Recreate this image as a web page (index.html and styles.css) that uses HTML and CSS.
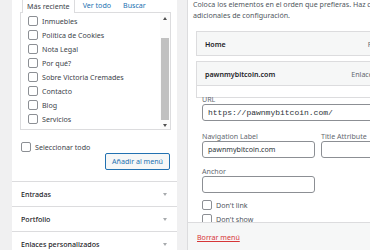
FILE: index.html
```html
<!DOCTYPE html>
<html lang="es">

<head>
  <meta charset="UTF-8">
  <meta name="viewport" content="width=device-width, initial-scale=1.0">
  <title>Menús</title>
  <link rel="stylesheet" href="styles.css">
</head>

<body>
  <div id="screen">
    <div id="sidebar">
      <div class="tabs">
        <span class="tab active">Más reciente</span>
        <span class="tab">Ver todo</span>
        <span class="tab">Buscar</span>
      </div>
      <div class="checklist-box">
        <ul class="checklist">
          <li><span class="cb"></span>Inmuebles</li>
          <li><span class="cb"></span>Política de Cookies</li>
          <li><span class="cb"></span>Nota Legal</li>
          <li><span class="cb"></span>Por qué?</li>
          <li><span class="cb"></span>Sobre Victoria Cremades</li>
          <li><span class="cb"></span>Contacto</li>
          <li><span class="cb"></span>Blog</li>
          <li><span class="cb"></span>Servicios</li>
        </ul>
        <div class="scrollbar">
          <span class="arrow up"></span>
          <div class="track">
            <div class="thumb"></div>
          </div>
          <span class="arrow down"></span>
        </div>
      </div>
      <div class="select-all"><span class="cb"></span>Seleccionar todo</div>
      <div class="add-row"><span class="button">Añadir al menú</span></div>
      <div class="section">Entradas<span class="caret"></span></div>
      <div class="section">Portfolio<span class="caret"></span></div>
      <div class="section">Enlaces personalizados<span class="caret"></span></div>
    </div>

    <div id="editor">
      <div class="editor-body">
        <p class="intro">
          <span>Coloca los elementos en el orden que prefieras. Haz clic en la flecha a la derecha del elemento para mostrar las opciones</span>
          <span>adicionales de configuración.</span>
        </p>
        <div class="menu-item item-home">
          <span class="item-title">Home</span>
          <span class="item-type">Página</span>
        </div>
        <div class="menu-item item-link">
          <span class="item-title">pawnmybitcoin.com</span>
          <span class="item-type">Enlace personalizado</span>
        </div>
        <div class="item-settings"></div>

        <div class="fields">
          <label class="field wide">
            <span class="label">URL</span>
            <span class="input mono">https://pawnmybitcoin.com/</span>
          </label>
          <div class="field-row">
            <label class="field">
              <span class="label">Navigation Label</span>
              <span class="input">pawnmybitcoin.com</span>
            </label>
            <label class="field">
              <span class="label">Title Attribute</span>
              <span class="input"></span>
            </label>
          </div>
          <label class="field">
            <span class="label">Anchor</span>
            <span class="input"></span>
          </label>
          <div class="option"><span class="cb"></span>Don't link</div>
          <div class="option"><span class="cb"></span>Don't show</div>
        </div>
      </div>
      <div class="editor-footer">
        <a class="delete">Borrar menú</a>
      </div>
    </div>
  </div>
</body>

</html>
```

FILE: styles.css
```css
* {
  margin: 0;
  padding: 0;
  box-sizing: border-box;
}

li {
  list-style: none;
}

html,
body {
  width: 370px;
  height: 250px;
  overflow: hidden;
}

body {
  background: #f0f0f1;
  font-family: "Noto Sans", "Open Sans", sans-serif;
  font-size: 7.1px;
  color: #3c434a;
}

#screen {
  display: flex;
  height: 250px;
}

/* 左侧：添加菜单项 */
#sidebar {
  width: 165px;
  margin-left: 12px;
  background: #ffffff;
  flex: none;
}

.tabs {
  display: flex;
  height: 12px;
  margin-left: 10px;
  align-items: flex-end;
}

.tab {
  color: #2271b1;
  padding: 0 4px 2px 4px;
  margin-right: 4px;
  line-height: 10px;
}

.tab.active {
  color: #3c434a;
  border: 1px solid #dcdcde;
  border-bottom: none;
  background: #fff;
  height: 15px;
  padding-top: 2px;
  margin-bottom: -1px;
  position: relative;
}

.checklist-box {
  display: flex;
  margin: 0 6px 0 8px;
  height: 118px;
  border: 1px solid #dcdcde;
}

.checklist {
  flex: 1;
  padding: 1px 0 0 7px;
}

.checklist li {
  display: flex;
  align-items: center;
  height: 14px;
  color: #3c434a;
}

.cb {
  width: 10px;
  height: 10px;
  border: 1px solid #8c8f94;
  border-radius: 2px;
  background: #fff;
  margin-right: 4px;
  flex: none;
}

.scrollbar {
  width: 10px;
  display: flex;
  flex-direction: column;
  align-items: center;
  background: #fbfbfb;
}

.arrow {
  width: 0;
  height: 0;
  border-left: 2.5px solid transparent;
  border-right: 2.5px solid transparent;
  margin: 4px 0;
}

.arrow.up {
  border-bottom: 3px solid #505050;
}

.arrow.down {
  border-top: 3px solid #505050;
}

.track {
  flex: 1;
  width: 100%;
  padding: 14px 1px 0 1px;
}

.thumb {
  height: 82px;
  background: #c1c1c1;
}

.select-all {
  display: flex;
  align-items: center;
  margin: 12px 0 0 9px;
}

.add-row {
  display: flex;
  justify-content: flex-end;
  padding-right: 7px;
  margin-top: 1px;
}

.button {
  height: 17px;
  padding: 0 6px;
  line-height: 15px;
  color: #2271b1;
  border: 1px solid #2271b1;
  border-radius: 2px;
  background: #f6f7f7;
}

.section {
  display: flex;
  align-items: center;
  justify-content: space-between;
  height: 25px;
  padding: 0 9px;
  border-top: 1px solid #dcdcde;
  font-weight: 500;
  color: #1d2327;
}

.add-row + .section {
  margin-top: 11px;
}

.caret {
  width: 0;
  height: 0;
  border-left: 2px solid transparent;
  border-right: 2px solid transparent;
  border-top: 3px solid #a7aaad;
  margin-right: 1px;
}

/* 右侧：菜单结构 */
#editor {
  flex: none;
  width: 480px;
  margin-left: 10px;
  background: #ffffff;
  border-left: 1px solid #dcdcde;
  display: flex;
  flex-direction: column;
}

.editor-body {
  flex: 1;
  overflow: hidden;
  padding-left: 5px;
}

.intro {
  color: #50575e;
  line-height: 11px;
  margin-top: -1px;
}

.intro span {
  display: block;
  white-space: nowrap;
}

.menu-item {
  display: flex;
  align-items: center;
  height: 25px;
  margin-left: 3px;
  padding-left: 8px;
  background: #f6f7f7;
  border: 1px solid #dcdcde;
  font-weight: 600;
  color: #1d2327;
}

.item-home {
  margin-top: 10px;
}

.item-link {
  margin-top: 5px;
}

.item-title {
  flex: none;
}

.item-type {
  font-weight: 400;
  color: #646970;
}

.item-home .item-type {
  margin-left: 142px;
}

.item-link .item-type {
  margin-left: 76px;
}

.item-settings {
  height: 12px;
  margin-left: 3px;
  border: 1px solid #dcdcde;
  border-top: none;
}

.fields {
  padding-left: 9px;
}

.field {
  display: flex;
  flex-direction: column;
  width: 113px;
}

.field.wide {
  width: 200px;
}

.field-row {
  display: flex;
  gap: 6px;
  margin-top: 14px;
}

.label {
  color: #646970;
  line-height: 8px;
  height: 9px;
  margin-top: -3px;
}

.input {
  height: 17px;
  border: 1px solid #8c8f94;
  border-radius: 3px;
  padding-left: 5px;
  line-height: 15px;
  color: #2c3338;
}

.mono {
  font-family: "Liberation Mono", monospace;
  font-size: 8px;
}

.field-row + .field {
  margin-top: 12px;
}

.option {
  display: flex;
  align-items: center;
  height: 14px;
  color: #50575e;
}

.field + .option {
  margin-top: 5px;
}

.editor-footer {
  height: 28px;
  flex: none;
  background: #f6f7f7;
  border-top: 1px solid #dcdcde;
  display: flex;
  align-items: center;
  padding-left: 9px;
}

.delete {
  color: #d63638;
  text-decoration: underline;
}
```
